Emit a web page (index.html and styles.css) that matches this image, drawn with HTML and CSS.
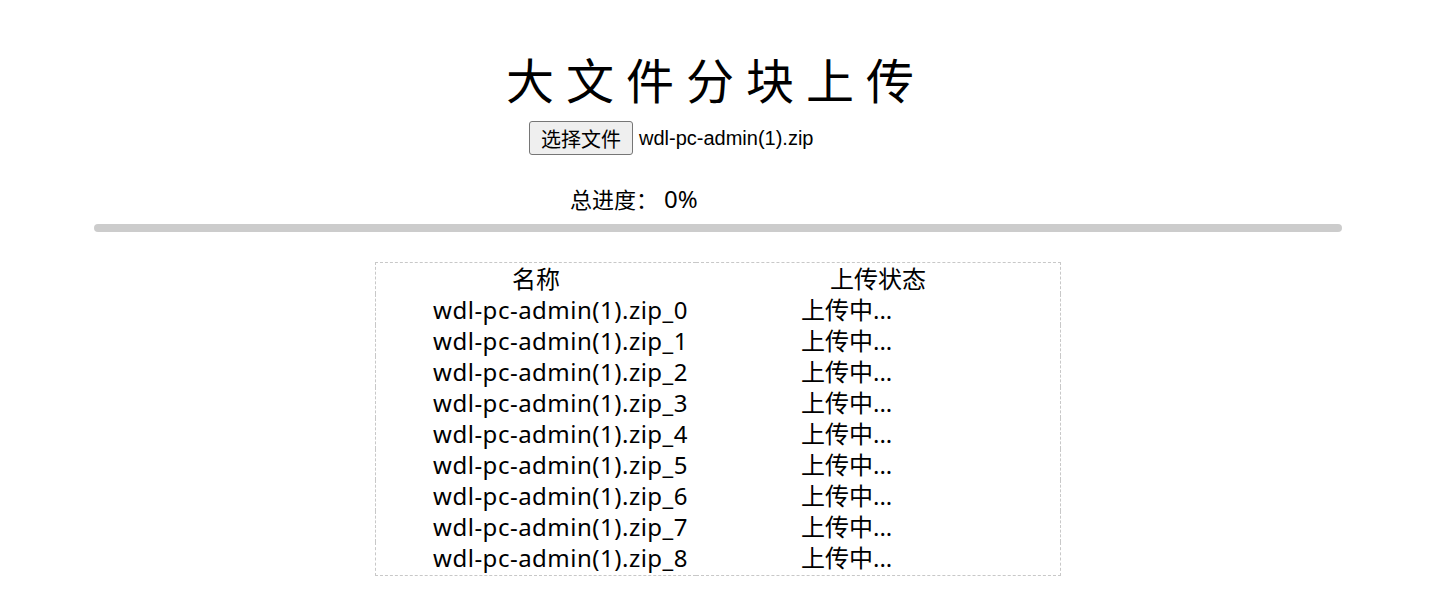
FILE: index.html
```html
<!DOCTYPE html>
<html lang="zh-CN">
  <head>
    <meta charset="UTF-8" />
    <meta name="viewport" content="width=device-width, initial-scale=1.0" />
    <title>大文件分块上传</title>

    <link rel="stylesheet" href="styles.css">
  </head>

  <body>
    <h1 class="title">大文件分块上传</h1>
    <div class="file-row">
      <button class="file-btn" type="button">选择文件</button>
      <span class="file-name">wdl-pc-admin(1).zip</span>
    </div>
    <div class="total">总进度：<span class="percent">0%</span></div>
    <div class="bar"><div class="bar-fill"></div></div>

    <table class="chunks">
      <thead>
        <tr>
          <th class="col-name">名称</th>
          <th class="col-status">上传状态</th>
        </tr>
      </thead>
      <tbody>
        <tr><td class="name">wdl-pc-admin(1).zip_0</td><td class="status">上传中...</td></tr>
        <tr><td class="name">wdl-pc-admin(1).zip_1</td><td class="status">上传中...</td></tr>
        <tr><td class="name">wdl-pc-admin(1).zip_2</td><td class="status">上传中...</td></tr>
        <tr><td class="name">wdl-pc-admin(1).zip_3</td><td class="status">上传中...</td></tr>
        <tr><td class="name">wdl-pc-admin(1).zip_4</td><td class="status">上传中...</td></tr>
        <tr><td class="name">wdl-pc-admin(1).zip_5</td><td class="status">上传中...</td></tr>
        <tr><td class="name">wdl-pc-admin(1).zip_6</td><td class="status">上传中...</td></tr>
        <tr><td class="name">wdl-pc-admin(1).zip_7</td><td class="status">上传中...</td></tr>
        <tr><td class="name">wdl-pc-admin(1).zip_8</td><td class="status">上传中...</td></tr>
      </tbody>
    </table>
  </body>
</html>
```

FILE: styles.css
```css
:root {
  --text-color: #000;
  --bar-color: #cccccc;
  --border-color: #c8c8c8;
  --font-family: "Noto Sans", "Noto Sans CJK SC", sans-serif;
}

body {
  margin: 8px;
  font-family: var(--font-family);
  color: var(--text-color);
  background-color: #fff;
}

.title {
  margin: 38px 0 0;
  text-align: center;
  font-size: 48px;
  font-weight: 400;
  line-height: 64px;
  letter-spacing: 12px;
  font-family: "Noto Sans CJK SC", sans-serif;
}

.file-row {
  display: flex;
  align-items: center;
  width: 374px;
  height: 34px;
  margin: 11px auto 0;
}

.file-btn {
  width: 104px;
  height: 34px;
  padding: 0;
  border: 1px solid #767676;
  border-radius: 3px;
  background-color: #efefef;
  font-family: "Noto Sans CJK SC", sans-serif;
  font-size: 20px;
  color: #000;
}

.file-name {
  margin-left: 6px;
  font-family: "Liberation Sans", Arial, sans-serif;
  font-size: 20px;
}

.total {
  width: 292px;
  margin: 29px auto 0;
  font-size: 22px;
  line-height: 30px;
}

.percent {
  margin-left: 6px;
  font-size: 24px;
}

.bar {
  width: 1248px;
  height: 8px;
  margin: 10px 0 0 86px;
  border-radius: 4px;
  background-color: var(--bar-color);
  overflow: hidden;
}

.bar-fill {
  width: 0;
  height: 100%;
  background-color: #4caf50;
}

.chunks {
  width: 686px;
  margin: 30px 0 0 367px;
  border: 1px dashed var(--border-color);
  border-collapse: collapse;
  font-size: 24px;
  line-height: 31px;
}

.chunks th,
.chunks td {
  padding: 0;
  white-space: nowrap;
}

.chunks th {
  font-weight: 400;
  text-align: center;
}

.chunks tbody tr:last-child td {
  padding-bottom: 2px;
}

.col-name {
  width: 320px;
}

.col-status {
  width: 364px;
}

.chunks td.name {
  text-align: right;
  padding-right: 8px;
  letter-spacing: 0.5px;
}

.chunks td.status {
  text-align: left;
  padding-left: 105px;
}
```
